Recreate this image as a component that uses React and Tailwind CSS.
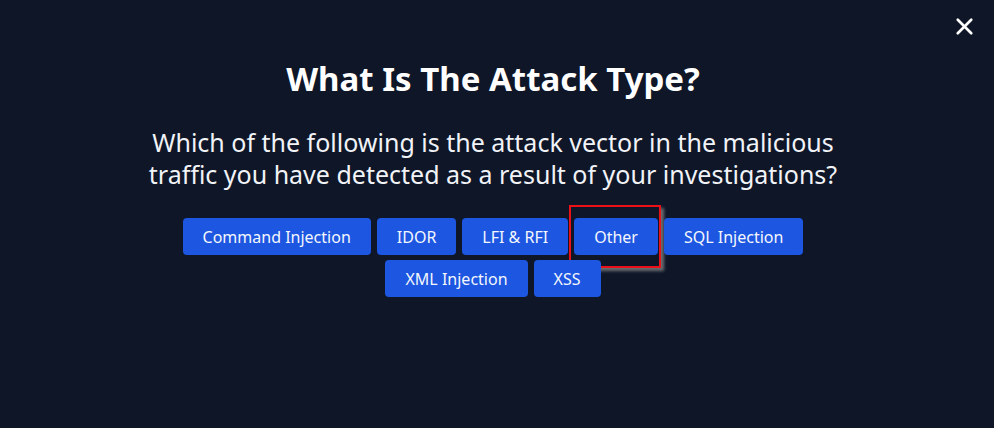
import { X } from 'lucide-react';

const options = [
  'Command Injection',
  'IDOR',
  'LFI & RFI',
  'Other',
  'SQL Injection',
  'XML Injection',
  'XSS',
];

export default function App() {
  return (
    <div
      className="relative w-[994px] h-[428px] overflow-hidden bg-[#0e1628] text-white"
      style={{ fontFamily: '"Noto Sans", "Open Sans", sans-serif' }}
    >
      <button className="absolute right-[16px] top-[13px] text-white">
        <X size={27} strokeWidth={2.4} />
      </button>

      <div className="w-[986px] flex flex-col items-center pt-[57px]">
        <h2 className="text-[33px] leading-[44px] font-bold">What Is The Attack Type?</h2>

        <p className="mt-[25px] max-w-[710px] text-center text-[25px] leading-[32px] text-[#f1f3f7]">
          Which of the following is the attack vector in the malicious traffic you have detected as a result of your investigations?
        </p>

        <div className="mt-[28px] max-w-[640px] flex flex-wrap justify-center gap-x-[6px] gap-y-[5px]">
          {options.map((opt) => (
            <div key={opt} className="relative">
              <button className="h-[37px] px-[20px] rounded-[4px] bg-[#1d56e0] text-[16px] text-[#f3f6fd]">
                {opt}
              </button>
              {opt === 'Other' && (
                <div className="absolute -left-[5px] -top-[13px] w-[92px] h-[63px] border-2 border-[#ec1018] shadow-[3px_3px_3px_rgba(130,130,130,0.8)] pointer-events-none" />
              )}
            </div>
          ))}
        </div>
      </div>
    </div>
  );
}
